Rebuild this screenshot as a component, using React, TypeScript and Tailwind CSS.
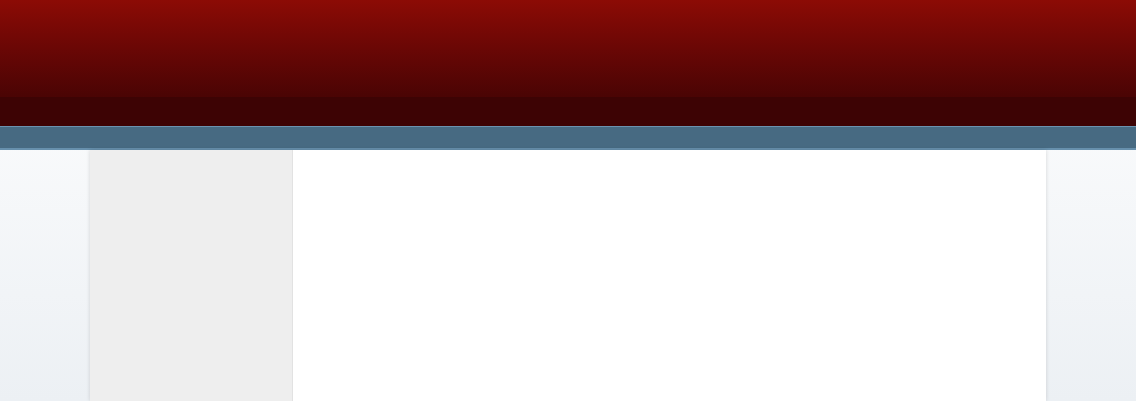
const App = () => {
  return (
    <div className="w-full h-[401px] overflow-hidden flex flex-col bg-gradient-to-b from-white to-[#ecf0f4]">
      <header className="h-[126px] shrink-0 flex flex-col">
        <div className="h-[97px] bg-gradient-to-b from-[#8c0b05] to-[#4a0404]" />
        <div className="flex-1 bg-[#3d0304]" />
      </header>
      <nav className="h-[24px] shrink-0 bg-[#476a82] border-t border-[#6a93b0] border-b-2 border-b-[#6790ad]" />
      <div className="flex-1 flex justify-center">
        <div className="w-[956px] flex shadow-[0_0_4px_rgba(0,0,0,0.15)] bg-white">
          <aside className="w-[203px] bg-[#eeeeee] border-r border-[#e2e2e2]" />
          <main className="flex-1 bg-white" />
        </div>
      </div>
    </div>
  );
};

export default App;
